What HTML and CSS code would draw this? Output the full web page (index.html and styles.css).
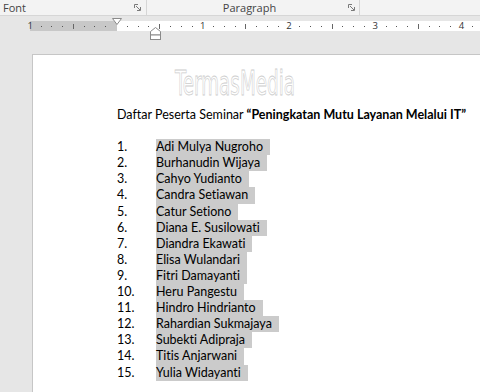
FILE: index.html
```html
<!DOCTYPE html>
<html>
<head>
<meta charset="utf-8">
<link rel="stylesheet" href="styles.css">
</head>
<body>
<div class="ribbon">
  <div class="group group-font">
    <span class="label">Font</span>
    <svg class="launcher" width="7" height="7" viewBox="0 0 7 7"><path d="M0.5 4V0.5H4" fill="none" stroke="#7a7a7a"/><path d="M2 2L6 6" stroke="#7a7a7a"/><path d="M3 6.5H6.5V3" fill="none" stroke="#7a7a7a"/></svg>
  </div>
  <div class="group group-para">
    <span class="label label-center">Paragraph</span>
    <svg class="launcher" width="7" height="7" viewBox="0 0 7 7"><path d="M0.5 4V0.5H4" fill="none" stroke="#7a7a7a"/><path d="M2 2L6 6" stroke="#7a7a7a"/><path d="M3 6.5H6.5V3" fill="none" stroke="#7a7a7a"/></svg>
  </div>
</div>

<div class="ruler-area">
  <div class="ruler">
    <div class="ticks">
      <span class="c n">1</span><span class="c d"></span><span class="c d"></span><span class="c d"></span><span class="c h"></span><span class="c d"></span><span class="c d"></span><span class="c d"></span>
      <span class="c"></span><span class="c d"></span><span class="c d"></span><span class="c d"></span><span class="c h"></span><span class="c d"></span><span class="c d"></span><span class="c d"></span>
      <span class="c n">1</span><span class="c d"></span><span class="c d"></span><span class="c d"></span><span class="c h"></span><span class="c d"></span><span class="c d"></span><span class="c d"></span>
      <span class="c n">2</span><span class="c d"></span><span class="c d"></span><span class="c d"></span><span class="c h"></span><span class="c d"></span><span class="c d"></span><span class="c d"></span>
      <span class="c n">3</span><span class="c d"></span><span class="c d"></span><span class="c d"></span><span class="c h"></span><span class="c d"></span><span class="c d"></span><span class="c d"></span>
      <span class="c n">4</span><span class="c d"></span>
    </div>
    <svg class="marker-first" width="10" height="8" viewBox="0 0 10 8"><polygon points="0.5,0.5 9.5,0.5 5,6.5" fill="#fff" stroke="#8a8a8a"/></svg>
    <svg class="marker-left" width="11" height="13" viewBox="0 0 11 13"><polygon points="0.5,4.5 5.5,0.5 10.5,4.5 10.5,8 0.5,8" fill="#fff" stroke="#8a8a8a"/><rect x="0.5" y="8" width="10" height="4.5" fill="#fff" stroke="#8a8a8a"/></svg>
  </div>
</div>

<div class="page">
  <div class="doc">
    <div class="wm"><span>TermasMedia</span></div>
    <p class="title">Daftar Peserta Seminar <b>“Peningkatan Mutu Layanan Melalui IT”</b></p>
    <div class="list">
      <div class="row"><span class="num">1.</span><span class="name">Adi Mulya Nugroho</span></div>
      <div class="row"><span class="num">2.</span><span class="name">Burhanudin Wijaya</span></div>
      <div class="row"><span class="num">3.</span><span class="name">Cahyo Yudianto</span></div>
      <div class="row"><span class="num">4.</span><span class="name">Candra Setiawan</span></div>
      <div class="row"><span class="num">5.</span><span class="name">Catur Setiono</span></div>
      <div class="row"><span class="num">6.</span><span class="name">Diana E. Susilowati</span></div>
      <div class="row"><span class="num">7.</span><span class="name">Diandra Ekawati</span></div>
      <div class="row"><span class="num">8.</span><span class="name">Elisa Wulandari</span></div>
      <div class="row"><span class="num">9.</span><span class="name">Fitri Damayanti</span></div>
      <div class="row"><span class="num">10.</span><span class="name">Heru Pangestu</span></div>
      <div class="row"><span class="num">11.</span><span class="name">Hindro Hindrianto</span></div>
      <div class="row"><span class="num">12.</span><span class="name">Rahardian Sukmajaya</span></div>
      <div class="row"><span class="num">13.</span><span class="name">Subekti Adipraja</span></div>
      <div class="row"><span class="num">14.</span><span class="name">Titis Anjarwani</span></div>
      <div class="row"><span class="num">15.</span><span class="name">Yulia Widayanti</span></div>
    </div>
  </div>
</div>
</body>
</html>
```

FILE: styles.css
```css
html, body {
  margin: 0;
  padding: 0;
}
body {
  width: 480px;
  height: 392px;
  overflow: hidden;
  background: #e6e6e6;
}

/* Ribbon group labels */
.ribbon {
  display: flex;
  height: 15px;
  background: #f3f3f3;
  border-bottom: 1px solid #d6d6d6;
  font-family: "Open Sans", "Noto Sans", sans-serif;
  font-size: 11px;
  color: #444;
}
.group {
  display: flex;
  align-items: center;
  box-sizing: border-box;
  border-right: 1px solid #d6d6d6;
}
.group-font {
  width: 147px;
  justify-content: space-between;
  padding: 0 5px 0 3px;
}
.group-para {
  width: 213px;
  padding: 0 4px 0 0;
}
.label {
  line-height: 15px;
}
.label-center {
  flex: 1;
  text-align: center;
  padding-left: 4px;
}
.launcher {
  display: block;
  flex: none;
}

/* Ruler */
.ruler-area {
  height: 38px;
  padding-top: 5px;
  box-sizing: border-box;
}
.ruler {
  position: relative;
  margin-left: 30px;
  height: 10px;
  background: linear-gradient(to right, #c8c8c8 0, #c8c8c8 86.7px, #ffffff 86.7px);
}
.ticks {
  display: flex;
  height: 100%;
  margin-left: -5.1px;
  align-items: center;
}
.c {
  flex: none;
  width: 10.79px;
  height: 100%;
  display: flex;
  align-items: center;
  justify-content: center;
  font-family: "Open Sans", "Noto Sans", sans-serif;
  font-size: 9.5px;
  line-height: 10px;
  color: #333;
}
.d::before {
  content: "";
  width: 1px;
  height: 1px;
  background: #555;
}
.h::before {
  content: "";
  width: 1px;
  height: 5px;
  background: #666;
}
.marker-first {
  position: absolute;
  left: 82px;
  top: -3px;
}
.marker-left {
  position: absolute;
  left: 120px;
  top: 6px;
}

/* Page */
.page {
  margin-left: 32px;
  height: 338px;
  background: #ffffff;
  border-left: 1px solid #c6c6c6;
  border-top: 1px solid #c6c6c6;
  box-sizing: border-box;
}
.doc {
  padding-left: 84px;
  font-family: Lato, "Open Sans", sans-serif;
  font-size: 12.5px;
  line-height: 16.1px;
  color: #000;
  font-variant-ligatures: none;
}
.wm {
  height: 52px;
  box-sizing: border-box;
  padding-top: 11px;
  padding-left: 58px;
}
.wm span {
  display: inline-block;
  font-family: "DejaVu Sans Condensed", "DejaVu Sans", sans-serif;
  font-stretch: condensed;
  font-size: 34px;
  line-height: 34px;
  transform: scaleX(0.6);
  transform-origin: left center;
  color: #ffffff;
  -webkit-text-stroke: 0.8px #cdcdcd;
}
.title {
  margin: 0;
}
.title b {
  font-weight: 700;
}
.list {
  margin-top: 16.1px;
}
.row {
  display: flex;
  height: 16.1px;
}
.num {
  width: 39px;
  flex: none;
}
.name {
  background: #cbcbcb;
  padding-right: 7px;
}
```
